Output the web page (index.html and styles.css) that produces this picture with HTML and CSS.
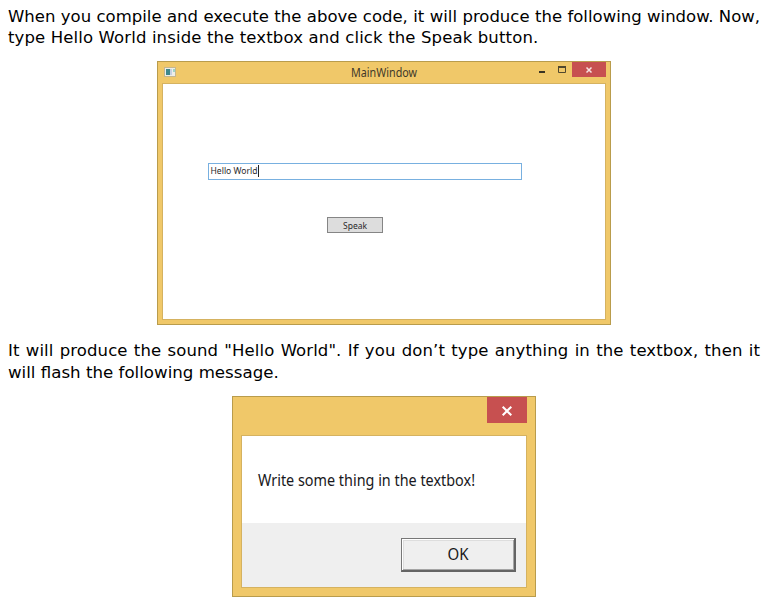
FILE: index.html
```html
<!DOCTYPE html>
<html lang="en">
<head>
<meta charset="utf-8">
<title>Speech tutorial</title>
<link rel="stylesheet" href="styles.css">
</head>
<body>
<main>
<p class="intro"><span class="line full">When you compile and execute the above code, it will produce the following window. Now,</span><span class="line l2">type Hello World inside the textbox and click the Speak button.</span></p>
<section class="window main-window">
  <header class="titlebar">
    <svg class="app-icon" width="12" height="10" viewBox="0 0 12 10"><rect x=".5" y=".5" width="11" height="9" fill="#eeeee8" stroke="#c5b68f"/><rect x="2" y="2" width="4" height="6" fill="#3f888c"/><rect x="6" y="2" width="2" height="6" fill="#c4d0e2"/><rect x="9" y="2" width="2" height="3" fill="#9ed5c6"/></svg>
    <h1 class="title"><svg width="72" height="16"><text x="0" y="12" textLength="66" lengthAdjust="spacingAndGlyphs">MainWindow</text></svg></h1>
    <div class="controls">
      <svg width="33" height="16" viewBox="0 0 33 16"><path d="M0 9h6v2H0z" fill="#3a3423"/><path d="M19.5 5.5h7v5h-7z" fill="none" stroke="#51482e"/><path d="M19 4h8v2h-8z" fill="#51482e"/></svg>
      <button class="close"><svg width="8" height="8" viewBox="0 0 8 8"><path d="M1.5 1.5l5 5M6.5 1.5l-5 5" stroke="#f7e3e3" stroke-width="1.5"/></svg></button>
    </div>
  </header>
  <div class="client">
    <div class="textbox"><svg width="47" height="13"><text x="-0.5" y="9" textLength="47" lengthAdjust="spacingAndGlyphs">Hello World</text></svg><i class="caret"></i></div>
    <button class="speak"><svg width="25" height="13"><text x="0" y="9.5" textLength="24" lengthAdjust="spacingAndGlyphs">Speak</text></svg></button>
  </div>
</section>
<p class="outro"><span class="line full l3">It will produce the sound "Hello World". If you don’t type anything in the textbox, then it</span><span class="line l4">will flash the following message.</span></p>
<section class="window dialog">
  <header class="dialog-bar"><button class="close"><svg width="12" height="12" viewBox="0 0 12 12"><path d="M1.7 1.7l8.6 8.6M10.3 1.7l-8.6 8.6" stroke="#fff" stroke-width="2"/></svg></button></header>
  <div class="dialog-client">
    <div class="message"><svg width="226" height="26"><text x="0" y="16" textLength="217" lengthAdjust="spacingAndGlyphs">Write some thing in the textbox!</text></svg></div>
    <footer><button class="ok"><svg width="22" height="20"><text x="0.5" y="15" textLength="21" lengthAdjust="spacingAndGlyphs">OK</text></svg></button></footer>
  </div>
</section>
</main>
</body>
</html>
```
FILE: styles.css
```css
* { box-sizing: border-box; }
body { margin: 0; background: #fff; color: #000; font-family: "DejaVu Sans", Verdana, sans-serif; overflow: hidden; }
main { width: 776px; height: 598px; padding: 6px 16px 0 8px; display: flex; flex-direction: column; }
p { margin: 0; font-size: 16.5px; }
svg { display: block; flex: none; overflow: visible; }
text { font-family: "Noto Sans", "Open Sans", sans-serif; }
button { margin: 0; padding: 0; border: 0; display: flex; align-items: center; justify-content: center; }
.line { display: block; height: 21px; line-height: 21px; white-space: nowrap; }
.full { text-align-last: justify; }
.l2 { letter-spacing: 0.13px; }
.l3 { letter-spacing: 0.1px; }
.l4 { font-size: 16.65px; }
.intro { height: 55px; }
.window { background: #f0c869; border: 1px solid #b99c4c; flex: none; }
.main-window { width: 454px; height: 264px; margin-left: 149px; padding: 0 4px 4px; }
.titlebar { height: 21px; display: grid; grid-template-columns: 12px 1fr 67px; padding-left: 2px; }
.app-icon { margin-top: 5px; }
.title { margin: 3px 0 0 175px; font-size: 12px; font-weight: 400; }
.title text { fill: #40382a; }
.controls { display: flex; }
.close { background: #c75050; }
.controls .close { width: 34px; height: 15px; }
.client { height: 237px; background: #fff; border: 1px solid #d5b260; display: flex; flex-direction: column; align-items: flex-start; padding-top: 79px; }
.textbox { width: 314px; height: 17px; margin-left: 45px; border: 1px solid #78b0e0; display: flex; padding: 1px 0 0 2px; font-size: 9px; }
.caret { width: 1px; height: 12px; background: #222; }
.speak { width: 56px; height: 16px; margin: 37px 0 0 164px; border: 1px solid #858585; background: #ddd; font-size: 9px; }
.textbox text, .speak text { fill: #2a2a2a; }
.outro { height: 71px; padding-top: 15px; }
.outro .line { height: 22px; }
.dialog { width: 304px; height: 201px; margin-left: 224px; padding: 0 8px 8px; }
.dialog-bar { height: 38px; display: flex; justify-content: flex-end; align-items: flex-start; }
.dialog-bar .close { width: 40px; height: 26px; padding-top: 2px; }
.dialog-client { height: 153px; border: 1px solid #d5b260; background: #fff; }
.message { height: 87px; padding: 34px 0 0 16px; font-size: 16px; }
.message text, .ok text { fill: #181820; }
footer { height: 64px; background: #efefef; display: flex; justify-content: flex-end; padding: 15px 10px 0 0; }
.ok { width: 115px; height: 34px; background: #efefef; border: solid; border-width: 1px 2px 2px 1px; border-color: #777 #646464 #646464 #777; box-shadow: inset 1px 1px #fff, inset -1px -1px #a5a5a5, inset 2px 2px #ddd; font-size: 16px; }
```
